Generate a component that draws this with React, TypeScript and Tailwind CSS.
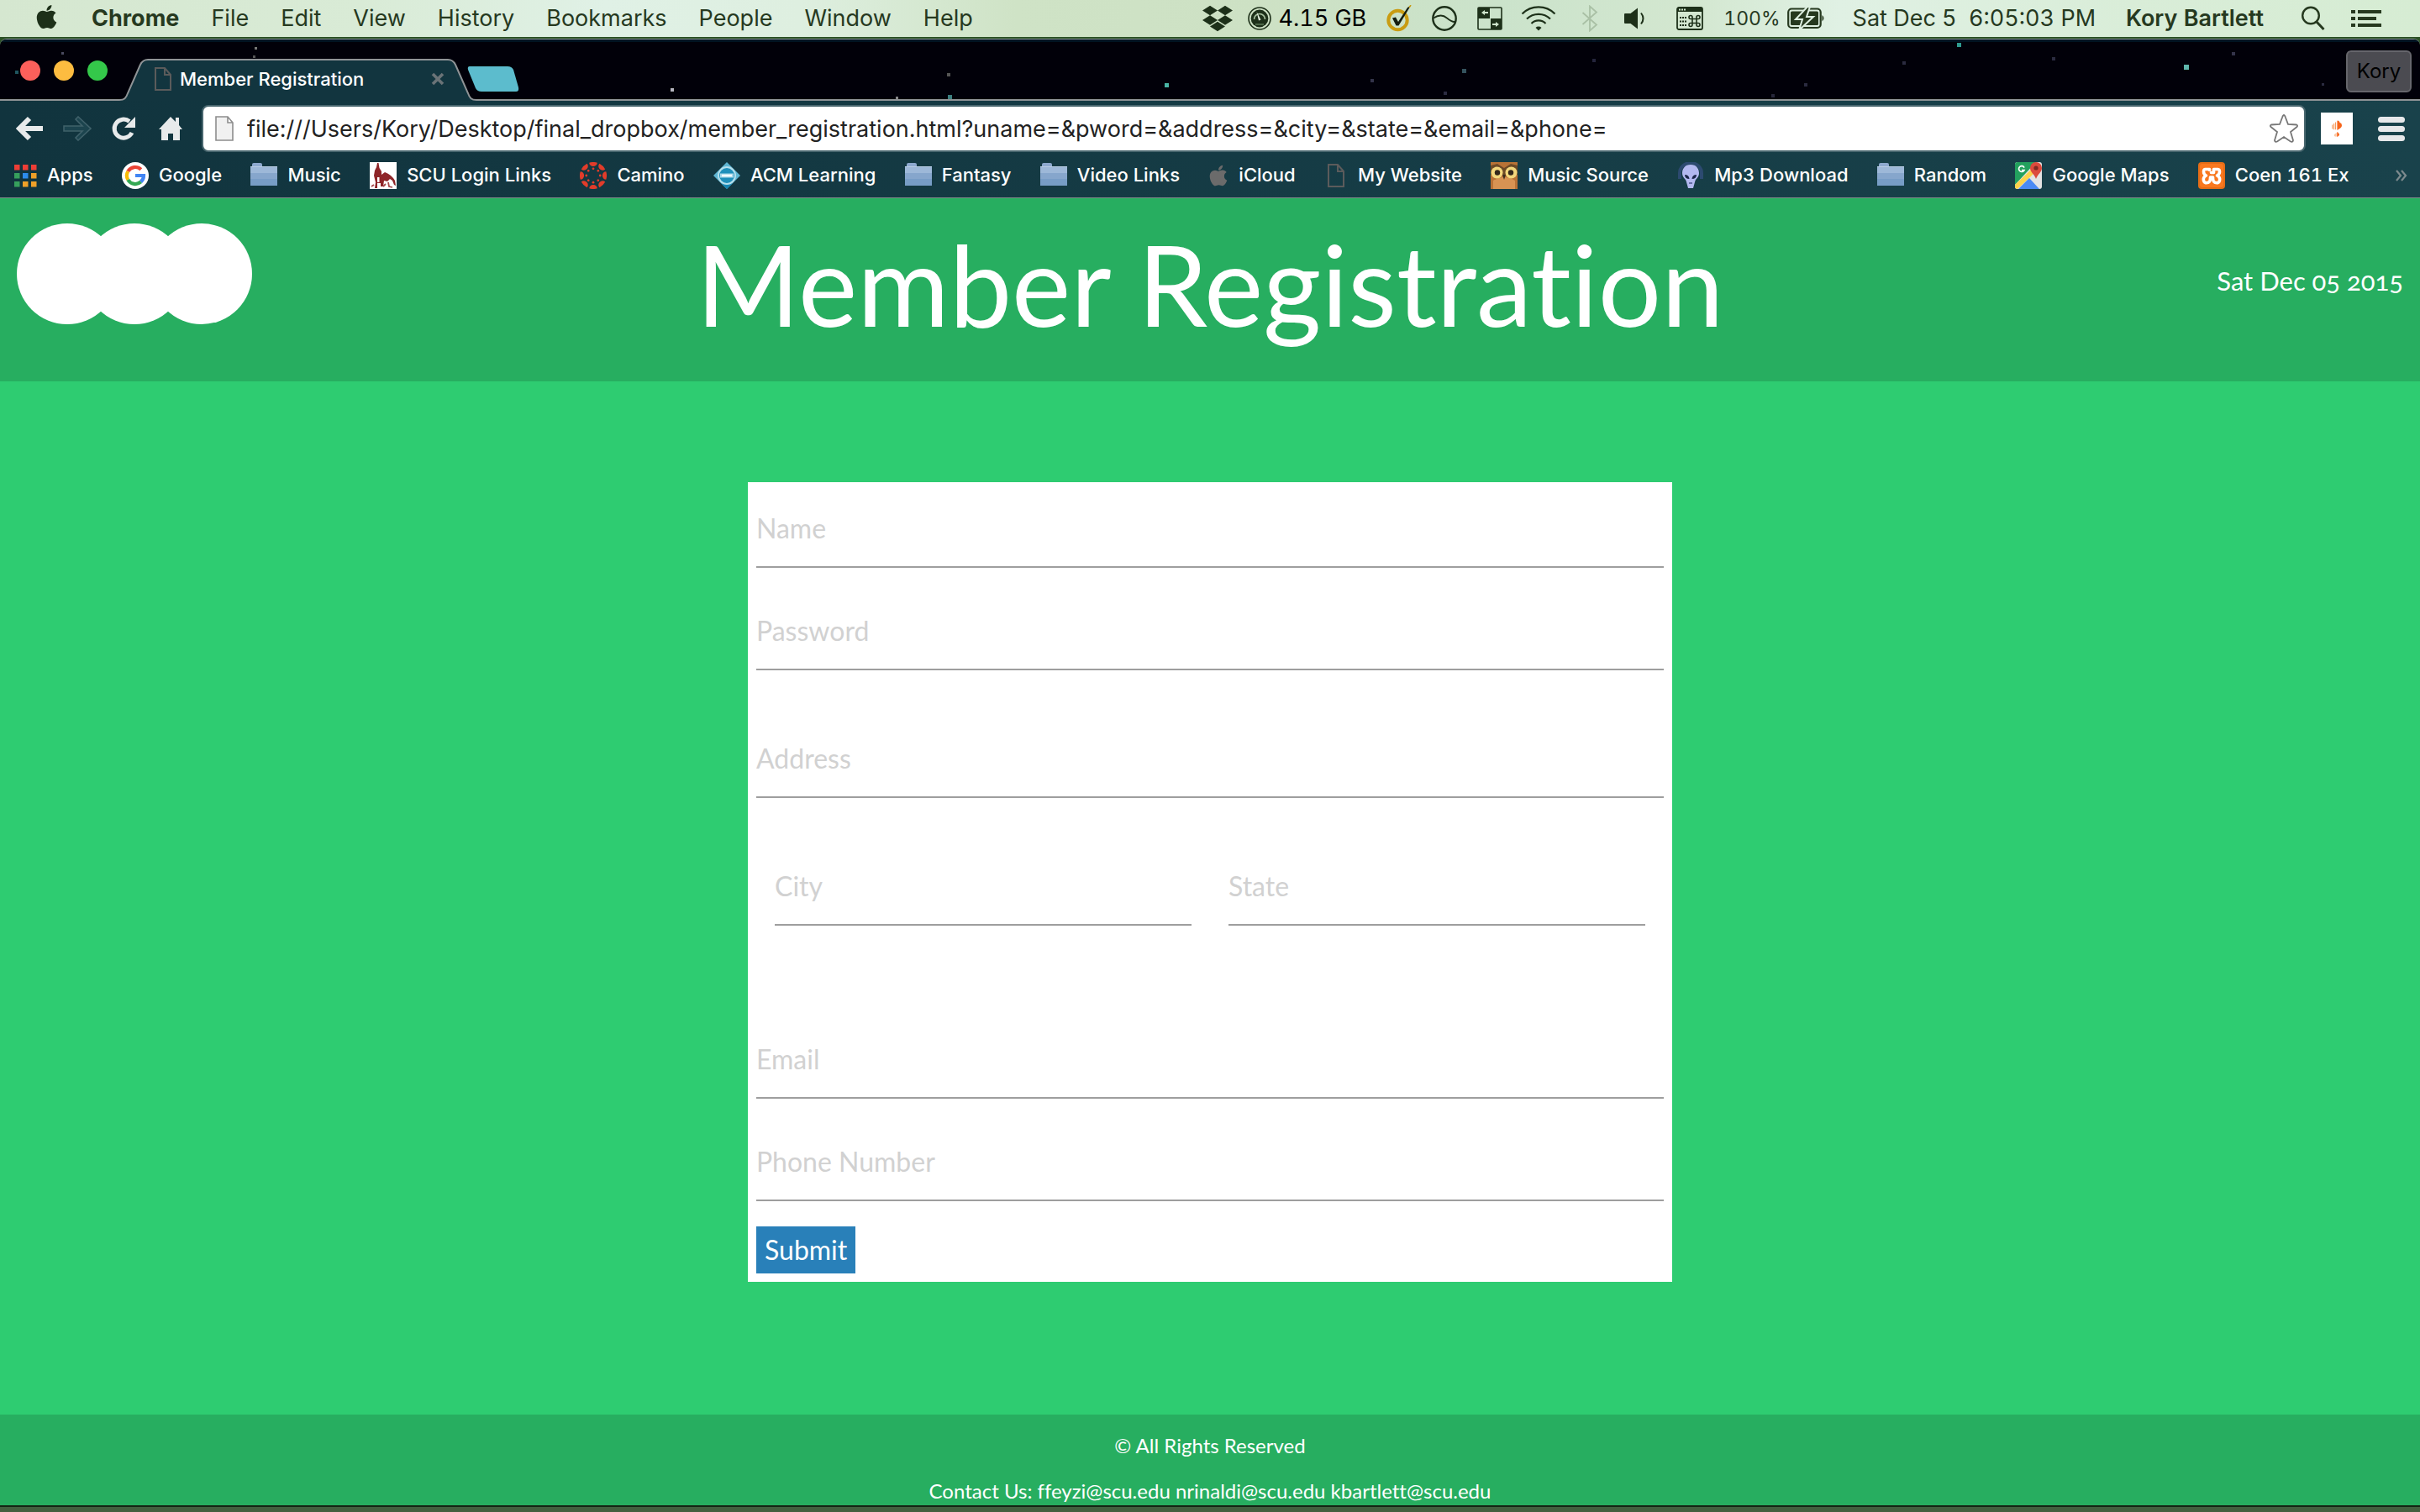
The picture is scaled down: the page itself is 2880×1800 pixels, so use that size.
import React from "react";
import { FaApple, FaDropbox } from "react-icons/fa";

const menus = ["File", "Edit", "View", "History", "Bookmarks", "People", "Window", "Help"];

function GaugeIcon() {
  return (
    <svg viewBox="0 0 28 28" className="h-7 w-7">
      <circle cx="14" cy="14" r="13" fill="none" stroke="#1d3019" strokeWidth="1.6" />
      <circle cx="14" cy="14" r="10.4" fill="#1d3019" />
      <path d="M7.500 15a6.500 6.500 0 0 1 13 0" fill="none" stroke="#a9c3a2" strokeWidth="1.600" />
      <path d="M10.500 6l5 9.500-2.500 1z" fill="#e4f0df" />
      <path d="M9 21h10" stroke="#5d7a57" strokeWidth="1.500" />
    </svg>
  );
}

function NortonIcon() {
  return (
    <svg viewBox="0 0 30 32" className="h-8 w-[30px]">
      <circle cx="13.5" cy="18" r="11.2" fill="none" stroke="#c99c12" strokeWidth="4" />
      <path d="M7 15.500l4-1 3 5.500L25 3l4-2.500L14.500 24.500h-3z" fill="#141d10" />
      <path d="M27 3l2-3" stroke="#c99c12" strokeWidth="1.5" />
    </svg>
  );
}

function OrbitIcon() {
  return (
    <svg viewBox="0 0 30 30" className="h-[30px] w-[30px]">
      <circle cx="15" cy="15" r="13.700" fill="none" stroke="#1d3019" strokeWidth="2.4" />
      <path d="M2 14.500C9 10 14 11 18 14.500c3 2.500 6 4.500 9 4.500" fill="none" stroke="#1d3019" strokeWidth="1.8" />
    </svg>
  );
}

function SwitchIcon() {
  return (
    <svg viewBox="0 0 30 28" className="h-7 w-[30px]">
      <rect x="1" y="1" width="28" height="26" rx="1" fill="none" stroke="#1d3019" strokeWidth="1.600" />
      <path d="M1 1h14v13H1zM16 14h13v13H16z" fill="#1d3019" />
      <path d="M5 7l4-3v2h4v2H9v2zM26 21l-4-3v2h-4v2h4v2z" fill="#cfe5cc" />
    </svg>
  );
}

function WifiIcon() {
  return (
    <svg viewBox="0 0 42 30" className="h-[30px] w-[42px]">
      <g fill="none" stroke="#1d3019" strokeWidth="2.200">
        <path d="M1.500 9.500a27.500 27.500 0 0 1 39 0" />
        <path d="M7 15.500a20 20 0 0 1 28 0" />
        <path d="M12.500 21a12 12 0 0 1 17 0" />
      </g>
      <path d="M17.500 26a5 5 0 0 1 7 0L21 29.500z" fill="#1d3019" />
    </svg>
  );
}

function BluetoothIcon() {
  return (
    <svg viewBox="0 0 20 32" className="h-8 w-5">
      <path d="M1.500 9L18 23.500 10 30.500V1.500L18 8.500 1.500 23" fill="none" stroke="#a9c0a5" strokeWidth="1.800" />
    </svg>
  );
}

function SpeakerIcon() {
  return (
    <svg viewBox="0 0 27 26" className="h-[26px] w-[27px]">
      <path d="M1 8q0-1 1-1h6.500L17 .5v25L8.500 19H2q-1 0-1-1z" fill="#1d3019" />
      <path d="M21 6.500q5 6.500 0 13" fill="none" stroke="#1d3019" strokeWidth="2" />
    </svg>
  );
}

function ShortcutIcon() {
  return (
    <svg viewBox="0 0 32 28" className="h-7 w-8">
      <rect x="1" y="1" width="30" height="26" rx="2" fill="none" stroke="#1d3019" strokeWidth="1.800" />
      <path d="M1 1h30v5H1z" fill="#1d3019" />
      <path d="M3 3.500h8" stroke="#cfe5cc" strokeWidth="1.800" strokeDasharray="2 1" />
      <path d="M4 13h8M4 17.500h8M4 22h8" stroke="#1d3019" strokeWidth="2" strokeDasharray="2 1" />
      <path d="M19 14.500h5v5h-5zM19 14.500v-2a2 2 0 1 0-2 2zM24 14.500h2a2 2 0 1 0-2-2zM24 19.500v2a2 2 0 1 0 2-2zM19 19.500h-2a2 2 0 1 0 2 2z" fill="none" stroke="#1d3019" strokeWidth="1.600" />
    </svg>
  );
}

function BatteryIcon() {
  return (
    <svg viewBox="0 0 46 26" className="h-[26px] w-[46px]">
      <rect x="1.200" y="1.500" width="38.500" height="22.500" rx="4" fill="none" stroke="#26391f" strokeWidth="2.200" />
      <rect x="4" y="4.500" width="33" height="16.500" rx="1.500" fill="#26391f" />
      <path d="M41.500 9q4 3.700 0 7.500z" fill="#26391f" />
      <path d="M24 -1L10 14h8l-4 13 17-16h-8l4-12z" fill="#26391f" stroke="#dff0e2" strokeWidth="2" />
    </svg>
  );
}

function SearchIcon() {
  return (
    <svg viewBox="0 0 30 30" className="h-[30px] w-[30px]">
      <circle cx="12" cy="11.500" r="9.800" fill="none" stroke="#26391f" strokeWidth="2.400" />
      <path d="M18.500 18.500l9 9.500" stroke="#26391f" strokeWidth="3" />
    </svg>
  );
}

function ListIcon() {
  return (
    <svg viewBox="0 0 36 22" className="h-[22px] w-9">
      <path d="M0 3h5M8 3h28M0 11h5M8 11h22M0 19h5M8 19h28" stroke="#26391f" strokeWidth="3.800" />
    </svg>
  );
}

function PageOutline({ className }: { className: string }) {
  return (
    <svg viewBox="0 0 20 28" className={className}>
      <path d="M1 1h11l7 8v18H1zM12 1v8h7" fill="none" stroke="#5b5b5b" strokeWidth="2" />
    </svg>
  );
}

function SoundcloudMark({ className }: { className: string }) {
  return (
    <svg viewBox="0 0 15 15" className={className}>
      <path d="M8 .800q3-1 4 3 3 .700 3 4t-2.500 4.500L8 15z" fill="#f7641a" />
      <path d="M1 7v6M3.300 5v9M5.700 3v11" stroke="#f79a5c" strokeWidth="1.400" />
    </svg>
  );
}

function MenuBar() {
  return (
    <header className="flex h-11 shrink-0 items-center justify-between bg-[linear-gradient(90deg,#d5e7d0_0%,#d9ebd6_15%,#e0f1e6_25%,#deefe0_33%,#cfe3c6_42%,#cde1c4_52%,#cbe3cb_62%,#d3e7d0_70%,#e0f1e4_76%,#d9edd8_88%,#d6ecd3_100%)] pl-10 pr-[46px] text-[27px] text-[#26391f]">
      <nav className="flex items-center gap-[38px]">
        <FaApple className="-mt-1 h-8 w-[31px] text-[#1d3019]" />
        <a href="#" className="font-bold">Chrome</a>
        {menus.map((m) => (
          <a key={m} href="#">{m}</a>
        ))}
      </nav>
      <div className="flex items-center tabular-nums">
        <FaDropbox className="h-9 w-9 text-[#1d3019]" />
        <span className="ml-[18px]"><GaugeIcon /></span>
        <span className="ml-2 text-[27px] text-black">4.15 GB</span>
        <span className="ml-6"><NortonIcon /></span>
        <span className="ml-6"><OrbitIcon /></span>
        <span className="ml-6"><SwitchIcon /></span>
        <span className="ml-[22px]"><WifiIcon /></span>
        <span className="ml-[30px]"><BluetoothIcon /></span>
        <span className="ml-[30px]"><SpeakerIcon /></span>
        <span className="ml-9"><ShortcutIcon /></span>
        <span className="ml-6 text-[23px]">100%</span>
        <span className="ml-2"><BatteryIcon /></span>
        <span className="ml-8 whitespace-pre">Sat Dec 5  6:05:03 PM</span>
        <span className="ml-9 font-semibold">Kory Bartlett</span>
        <span className="ml-11"><SearchIcon /></span>
        <span className="ml-[30px]"><ListIcon /></span>
      </div>
    </header>
  );
}

const stars = [
  [18, 34, "#1f5560", 4], [73, 12, "#4a4a60", 3], [303, 6, "#777", 3], [301, 16, "#555", 3],
  [798, 55, "#b5b5c0", 4], [1066, 65, "#888", 3], [1127, 37, "#555", 4], [1128, 63, "#3c7f80", 5],
  [1386, 49, "#49b5a5", 5], [1631, 44, "#33334a", 4], [1740, 32, "#34525e", 5], [1718, 59, "#2c2c42", 4],
  [1895, 20, "#24243c", 4], [2108, 62, "#26263a", 4], [2147, 49, "#2b2b40", 4], [2264, 23, "#2b2b40", 4],
  [2329, 1, "#2f9a90", 5], [2442, 18, "#2b2b40", 4], [2599, 27, "#5fb5ac", 6], [2656, 12, "#34344a", 4],
  [2763, 49, "#2b2b40", 3],
] as const;

function TabStrip() {
  return (
    <div className="relative flex h-[73px] shrink-0 items-end border-t-3 border-[#001322] bg-[#010009]">
      <svg className="absolute inset-0 h-full w-full" aria-hidden="true">
        {stars.map(([x, y, c, s]) => (
          <rect key={x} x={x} y={y} width={s} height={s} fill={c} />
        ))}
        <rect x="0" y="68" width="100%" height="2" fill="#8f9396" />
      </svg>
      <div className="relative mb-6 ml-6 flex gap-4">
        <span className="h-6 w-6 rounded-full bg-[#fc605b]" />
        <span className="h-6 w-6 rounded-full bg-[#fdbc40]" />
        <span className="h-6 w-6 rounded-full bg-[#34c84a]" />
      </div>
      <div className="relative ml-[14px] h-[50px] w-[426px]">
        <svg viewBox="0 0 426 50" className="absolute inset-0 h-full w-full">
          <path
            d="M0 49c6 0 8-2 10-8L25 7c2-4 4-6 9-6h357c5 0 7 2 9 6l15 34c2 6 4 8 10 8v1H0z"
            fill="#12353f"
          />
          <path
            d="M0 49c6 0 8-2 10-8L25 7c2-4 4-6 9-6h357c5 0 7 2 9 6l15 34c2 6 4 8 10 8"
            fill="none"
            stroke="#8f9396"
            strokeWidth="2"
          />
        </svg>
        <div className="relative flex h-full items-center pl-[42px] pr-[38px] pb-[2px] text-[22px] font-medium text-white">
          <PageOutline className="h-7 w-5" />
          <span className="ml-[10px]">Member Registration</span>
          <button aria-label="Close tab" className="ml-auto">
            <svg viewBox="0 0 18 18" className="h-[18px] w-[18px]">
              <path d="M3 3l12 12M15 3L3 15" stroke="#6a7377" strokeWidth="3.600" />
            </svg>
          </button>
        </div>
      </div>
      <button aria-label="New tab" className="relative mb-[11px] -ml-3">
        <svg viewBox="0 0 62 30" className="h-[30px] w-[62px]">
          <path d="M3 0h45q5 0 7 4l6 21q1 5-3 5H17q-5 0-7-4L1 4q-1-4 2-4z" fill="#5cbccd" />
        </svg>
      </button>
      <button className="relative mb-[10px] ml-auto mr-[10px] h-[50px] w-[78px] rounded-md border-2 border-[#66666c] bg-[#4b4b51] text-[24px] text-black">
        Kory
      </button>
    </div>
  );
}

function Toolbar() {
  return (
    <div className="flex h-[62px] shrink-0 items-center pl-[18px] pr-[18px] pt-1">
      <button aria-label="Back">
        <svg viewBox="0 0 36 30" className="h-[30px] w-9">
          <path d="M17 3L5 15l12 12M6 15h27" fill="none" stroke="#e8eaeb" strokeWidth="6" />
        </svg>
      </button>
      <button aria-label="Forward" className="ml-5">
        <svg viewBox="0 0 36 30" className="h-[30px] w-9">
          <path d="M16 4l3-3 15 14-15 14-3-3 8-8H2v-6h22z" fill="#1c444e" stroke="#3f616a" strokeWidth="1.600" />
        </svg>
      </button>
      <button aria-label="Reload" className="ml-[22px]">
        <svg viewBox="0 0 30 30" className="h-[30px] w-[30px]">
          <path d="M25 20A11 11 0 1 1 22 6.500" fill="none" stroke="#e8eaeb" strokeWidth="5" />
          <path d="M29 1v13H16z" fill="#e8eaeb" />
        </svg>
      </button>
      <button aria-label="Home" className="ml-[26px]">
        <svg viewBox="0 0 30 30" className="h-[30px] w-[30px]">
          <path d="M15 1l6 6V2h4v9l4 5h-3v13h-8v-8h-6v8H4V16H1z" fill="#e8eaeb" />
        </svg>
      </button>
      <label className="ml-[22px] flex h-[56px] flex-1 items-center rounded-lg border-2 border-[#48666e] bg-white pl-[14px] pr-[6px]">
        <svg viewBox="0 0 22 30" className="h-[30px] w-[22px]">
          <path d="M1 1h14l6 7v21H1zM15 1v7h6" fill="#f1f1f1" stroke="#8d8d8d" strokeWidth="1.600" />
        </svg>
        <input
          aria-label="Address"
          className="ml-4 min-w-0 flex-1 bg-transparent pt-[2px] text-[27px] text-[#222] outline-none"
          defaultValue="file:///Users/Kory/Desktop/final_dropbox/member_registration.html?uname=&pword=&address=&city=&state=&email=&phone="
        />
        <svg viewBox="0 0 36 36" className="h-9 w-9">
          <path
            d="M18 2q1 0 2 3l3 8 10 .5q2 1 .5 2.500L26 22l3 10q-.5 2.500-3 1.500L18 28l-8 5.500q-2.500 1-3-1.500l3-10-7.500-6q-1.500-1.500.5-2.500L13 13l3-8q1-3 2-3z"
            fill="#fff"
            stroke="#777"
            strokeWidth="1.800"
          />
        </svg>
      </label>
      <button aria-label="SoundCloud" className="ml-[18px] flex h-[38px] w-[38px] flex-col items-center justify-center gap-[2px] bg-white">
        <SoundcloudMark className="h-[12px] w-4" />
        <SoundcloudMark className="h-[6px] w-2" />
      </button>
      <button aria-label="Menu" className="ml-[30px] flex flex-col gap-1">
        <span className="h-[7px] w-8 rounded-sm bg-[#e6e8ea]" />
        <span className="h-[7px] w-8 rounded-sm bg-[#e6e8ea]" />
        <span className="h-[7px] w-8 rounded-sm bg-[#e6e8ea]" />
      </button>
    </div>
  );
}

function AppsIcon() {
  const colors = ["#ee3e36", "#ee3e36", "#ee3e36", "#36a05c", "#2d8ceb", "#efa028", "#36a05c", "#efa028", "#efa028"];
  return (
    <svg viewBox="0 0 28 28" className="h-7 w-7">
      {colors.map((c, i) => (
        <rect key={i} x={(i % 3) * 10 + 1} y={Math.floor(i / 3) * 10 + 1} width="6.500" height="6.500" fill={c} />
      ))}
    </svg>
  );
}

function GoogleIcon() {
  return (
    <svg viewBox="0 0 32 32" className="h-8 w-8">
      <circle cx="16" cy="16" r="16" fill="#fff" />
      <g fill="none" strokeWidth="4.200">
        <path d="M22.800 8.700A10 10 0 0 0 7.300 11" stroke="#ea4335" />
        <path d="M7.300 11a10 10 0 0 0 0 10" stroke="#fbbc05" />
        <path d="M7.300 21a10 10 0 0 0 15.400 2.400" stroke="#34a853" />
        <path d="M22.700 23.400A10 10 0 0 0 26 16h-10" stroke="#4285f4" />
      </g>
    </svg>
  );
}

function FolderIcon() {
  return (
    <svg viewBox="0 0 32 32" className="h-8 w-8">
      <path d="M2 6V3q0-2 2-2h8q2 0 2 2v3z" fill="#8ea9cf" />
      <path d="M0 5h32v23H0z" fill="#86a6cc" />
      <path d="M0 5h32v8H0z" fill="#9db8d8" />
      <path d="M0 20h32v8H0z" fill="#779dc6" />
      <path d="M0 5.500h32" stroke="#b9cde4" />
    </svg>
  );
}

function ChurchIcon() {
  return (
    <svg viewBox="0 0 32 32" className="h-8 w-8">
      <path d="M0 0h32v32H0z" fill="#fff" />
      <path d="M9 1h1.500l1 6 2.500 4v4l4-3q8 3 12 10l1 6-2-1-2-5-3-2-3 3-4-1-1 7h-3v-4H9v6H6l1-7-2-8 1-6 2-4z" fill="#8e2528" />
      <path d="M2 29l3-2M16 29l3-3M22 24l1 5 4 1" fill="none" stroke="#a6484a" strokeWidth="1.800" />
      <path d="M9 18h2.500v6H9z" fill="#fff" />
    </svg>
  );
}

function CanvasIcon() {
  const spokes = [0, 45, 90, 135, 180, 225, 270, 315];
  return (
    <svg viewBox="0 0 32 32" className="h-8 w-8">
      {spokes.map((a) => (
        <g key={a} transform={`rotate(${a} 16 16)`} fill="#e23c2a">
          <path d="M11.200.700a16 16 0 0 1 9.600 0a4.800 4.400 0 0 1-9.600 0z" />
          <circle cx="16" cy="7.800" r="1.400" />
        </g>
      ))}
    </svg>
  );
}

function AcmIcon() {
  return (
    <svg viewBox="0 0 32 32" className="h-8 w-8">
      <path d="M16 0l16 16-16 16L0 16z" fill="#5fb6d3" />
      <path d="M16 22l7 3-7 7-7-7z" fill="#1787b4" />
      <circle cx="16" cy="16" r="10" fill="#1f90bb" stroke="#b4dfec" strokeWidth="2" />
      <path d="M8 13.500h16v5H8z" fill="#a8d8e8" />
      <path d="M10 16h12" stroke="#f2fbfd" strokeWidth="2.500" />
    </svg>
  );
}

function OwlIcon() {
  return (
    <svg viewBox="0 0 32 32" className="h-8 w-8">
      <path d="M0 0h32v32H0z" fill="#b87236" />
      <path d="M0 4l8-2 8 5 8-5 8 2v11H0z" fill="#6d4a26" />
      <path d="M3 22q13-8 26 0v10H3z" fill="#d79353" />
      <circle cx="7.500" cy="12.500" r="7" fill="#f3d77c" />
      <circle cx="24.500" cy="12.500" r="7" fill="#f3d77c" />
      <circle cx="8" cy="12.500" r="3.200" fill="#33271b" />
      <circle cx="24" cy="12.500" r="3.200" fill="#33271b" />
      <path d="M14 15h4l-2 6z" fill="#3a2b1d" />
    </svg>
  );
}

function AlienIcon() {
  return (
    <svg viewBox="0 0 32 32" className="h-8 w-8">
      <path d="M3 20V13a13 12 0 0 1 26 0v7" fill="none" stroke="#2c4a70" strokeWidth="4" />
      <path d="M16 3c7 0 10 5 10 10 0 5-3 6-4.500 9L19 31h-6l-2.500-9C9 19 6 18 6 13 6 8 9 3 16 3z" fill="#b3b9f0" />
      <path d="M9 15q5 0 5.500 5Q9 20 9 15zM23 15q-5 0-5.500 5 5.500 0 5.500-5z" fill="#1c2749" />
      <path d="M14 25h4" stroke="#4c568f" strokeWidth="1.500" />
    </svg>
  );
}

function MapsIcon() {
  return (
    <svg viewBox="0 0 32 32" className="h-8 w-8">
      <rect width="32" height="32" rx="3" fill="#e3e3e3" />
      <path d="M3 0h22L0 27V3q0-3 3-3z" fill="#23a15e" />
      <path d="M0 27L19 9l4 4L3 32q-3 0-3-3z" fill="#fcd34b" />
      <path d="M4 32l13-13 12 13z" fill="#4a8af4" />
      <path d="M11 6.500A3.400 3.400 0 1 0 11 9.500H8" fill="none" stroke="#fff" strokeWidth="1.700" />
      <path d="M25 0a7 7 0 0 1 7 7c0 5-5 7-7 13-2-6-7-8-7-13a7 7 0 0 1 7-7z" fill="#dc4a3d" />
      <circle cx="25" cy="7" r="2.600" fill="#7d2a22" />
    </svg>
  );
}

function XamppIcon() {
  return (
    <svg viewBox="0 0 32 32" className="h-8 w-8">
      <rect width="32" height="32" rx="4" fill="#e56d17" />
      <rect x="2" y="2" width="28" height="28" rx="3" fill="#f9781f" />
      <path
        d="M13.500 9.500v-1h-5q-2 0-2 3t3 4.500q-4 2-3 6t6 2q2-1 2-6h3q0 5 2 6 5 2 6-2t-3-6q3-1.500 3-4.500t-2-3h-5v4h-3"
        fill="none"
        stroke="#fff"
        strokeWidth="3.600"
        strokeLinecap="round"
        strokeLinejoin="round"
      />
    </svg>
  );
}

const bookmarks: { label: string; icon: React.ReactNode }[] = [
  { label: "Apps", icon: <AppsIcon /> },
  { label: "Google", icon: <GoogleIcon /> },
  { label: "Music", icon: <FolderIcon /> },
  { label: "SCU Login Links", icon: <ChurchIcon /> },
  { label: "Camino", icon: <CanvasIcon /> },
  { label: "ACM Learning", icon: <AcmIcon /> },
  { label: "Fantasy", icon: <FolderIcon /> },
  { label: "Video Links", icon: <FolderIcon /> },
  { label: "iCloud", icon: <FaApple className="h-7 w-6 text-[#6b6b6b]" /> },
  { label: "My Website", icon: <PageOutline className="mx-1 h-7 w-5" /> },
  { label: "Music Source", icon: <OwlIcon /> },
  { label: "Mp3 Download", icon: <AlienIcon /> },
  { label: "Random", icon: <FolderIcon /> },
  { label: "Google Maps", icon: <MapsIcon /> },
  { label: "Coen 161 Ex", icon: <XamppIcon /> },
];

function BookmarksBar() {
  return (
    <nav className="flex h-[54px] shrink-0 items-center justify-between border-b border-[#7f8a8a] pl-4 pr-[14px] text-[22px] font-medium tabular-nums text-white">
      {bookmarks.map((b) => (
        <a key={b.label} href="#" className="flex items-center gap-3 whitespace-nowrap">
          {b.icon}
          {b.label}
        </a>
      ))}
      <button aria-label="More bookmarks" className="ml-5">
        <svg viewBox="0 0 16 16" className="h-4 w-4">
          <path d="M2 2l5 6-5 6M8 2l5 6-5 6" fill="none" stroke="#7d8a8e" strokeWidth="2.200" />
        </svg>
      </button>
    </nav>
  );
}

function Field({ label, type = "text" }: { label: string; type?: string }) {
  return (
    <input
      type={type}
      aria-label={label}
      placeholder={label}
      className="mb-[30px] block h-[92px] w-full border-b-2 border-[#9e9e9e] bg-transparent pb-[2px] text-[32px] text-black outline-none placeholder:text-[#d1d1d1]"
    />
  );
}

function RegistrationPage() {
  return (
    <div className="flex flex-1 flex-col bg-[#2ecc71] font-['Lato',sans-serif] text-white [font-variant-ligatures:none]">
      <header className="grid h-[218px] grid-cols-[1fr_auto_1fr] items-start bg-[#27ae60]">
        <div className="ml-5 mt-[30px] flex">
          <span className="h-[120px] w-[120px] rounded-full bg-white" />
          <span className="-ml-10 h-[120px] w-[120px] rounded-full bg-white" />
          <span className="-ml-10 h-[120px] w-[120px] rounded-full bg-white" />
        </div>
        <h1 className="mt-[26px] text-[133px] leading-[152px]">Member Registration</h1>
        <p className="mr-5 mt-[78px] text-right text-[31px] leading-10 [font-variant-numeric:oldstyle-nums]">Sat Dec 05 2015</p>
      </header>
      <main className="flex flex-1 flex-col items-center pt-[120px]">
        <form className="w-[1100px] bg-white p-[10px]">
          <Field label="Name" />
          <Field label="Password" type="password" />
          <div className="pt-[30px]">
            <Field label="Address" />
          </div>
          <div className="grid grid-cols-2 gap-11 px-[22px] pb-[84px] pt-[30px]">
            <Field label="City" />
            <Field label="State" />
          </div>
          <Field label="Email" type="email" />
          <Field label="Phone Number" type="tel" />
          <button type="submit" className="block h-14 bg-[#2980b9] px-[10px] text-[32px] text-white">
            Submit
          </button>
        </form>
      </main>
      <footer className="h-[108px] bg-[#27ae60] pt-[10px] text-center text-[24px] leading-[54px]">
        <p>© All Rights Reserved</p>
        <p>Contact Us: ffeyzi@scu.edu nrinaldi@scu.edu kbartlett@scu.edu</p>
      </footer>
    </div>
  );
}

export default function App() {
  return (
    <div className="flex min-h-screen flex-col bg-[#2c5226] font-['Inter',sans-serif]">
      <MenuBar />
      <div className="mt-[2px] flex flex-1 flex-col overflow-hidden rounded-t-lg border-t border-[#8c979b]">
        <TabStrip />
        <div className="bg-linear-to-r from-[#11343e] to-[#19424b]">
          <Toolbar />
          <BookmarksBar />
        </div>
        <RegistrationPage />
      </div>
      <div className="h-2 shrink-0 border-t-2 border-[#142414] bg-[#42603f]" />
    </div>
  );
}
